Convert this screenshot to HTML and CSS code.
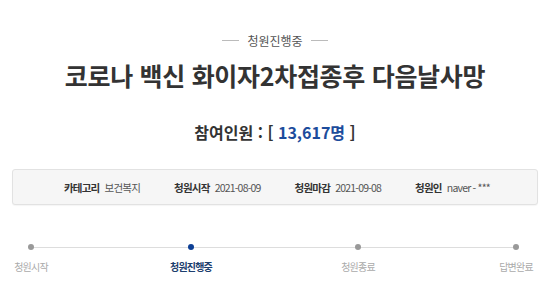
FILE: index.html
```html
<!DOCTYPE html>
<html lang="ko">
<head>
    <meta charset="utf-8" />
    <title>청원진행중</title>
    <link rel="stylesheet" href="styles.css">
</head>
<body>
<div class="petition">
    <div class="status-tag"><span>청원진행중</span></div>

    <h1 class="title">코로나 백신 화이자2차접종후 다음날사망</h1>

    <p class="count">참여인원 : [ <span class="num">13,617명</span> ]</p>

    <ul class="info">
        <li><b>카테고리</b> 보건복지</li>
        <li><b>청원시작</b> 2021-08-09</li>
        <li><b>청원마감</b> 2021-09-08</li>
        <li><b>청원인</b> naver - ***</li>
    </ul>

    <ol class="steps">
        <li class="step first">청원시작</li>
        <li class="step on">청원진행중</li>
        <li class="step">청원종료</li>
        <li class="step last">답변완료</li>
    </ol>
</div>
</body>
</html>
```

FILE: styles.css
```css
html, body {
    margin: 0;
    background: #fff;
    color: #333;
    font-family: "Noto Sans CJK KR", "Noto Sans", sans-serif;
}

.petition {
    width: 550px;
    padding-top: 30px;
}

.status-tag {
    display: flex;
    justify-content: center;
    align-items: center;
    gap: 8px;
    font-size: 12px;
    color: #555;
    height: 20px;
}
.status-tag::before,
.status-tag::after {
    content: "";
    width: 17px;
    height: 1px;
    background: #bbb;
}

.title {
    margin: 10px 0 0;
    text-align: center;
    font-size: 25px;
    font-weight: 700;
    letter-spacing: -0.3px;
    color: #333;
    line-height: 30px;
}

.count {
    margin: 31px 0 0;
    text-align: center;
    font-size: 16px;
    font-weight: 700;
    color: #333;
    line-height: 22px;
}
.count .num {
    color: #1c4c9c;
}

.info {
    list-style: none;
    margin: 26px 12px 0;
    padding: 0 0 0 51px;
    height: 34px;
    display: flex;
    align-items: center;
    gap: 34px;
    background: #f6f6f6;
    border: 1px solid #e2e2e2;
    border-radius: 3px;
    box-shadow: 0 1px 1px rgba(0,0,0,.04);
    font-size: 10.5px;
    letter-spacing: -0.8px;
    color: #555;
}
.info b {
    color: #333;
    margin-right: 3px;
}

.steps {
    list-style: none;
    margin: 36px 0 0;
    padding: 0;
    height: 40px;
    position: relative;
    font-size: 10px;
    letter-spacing: -0.8px;
    color: #aaa;
}
.steps::before {
    content: "";
    position: absolute;
    left: 31px;
    right: 34px;
    top: 6px;
    height: 1px;
    background: #ddd;
}
.step {
    position: absolute;
    top: 0;
    width: 80px;
    margin-left: -40px;
    text-align: center;
    padding-top: 18px;
}
.step::before {
    content: "";
    position: absolute;
    left: 37px;
    top: 3px;
    width: 6px;
    height: 6px;
    border-radius: 50%;
    background: #999;
}
.step:nth-child(1) { left: 31px; }
.step:nth-child(2) { left: 191px; }
.step:nth-child(3) { left: 358px; }
.step:nth-child(4) { left: 516px; }
.step.on {
    color: #1d3e6e;
    font-weight: 700;
}
.step.on::before {
    background: #0d3f95;
}
```
